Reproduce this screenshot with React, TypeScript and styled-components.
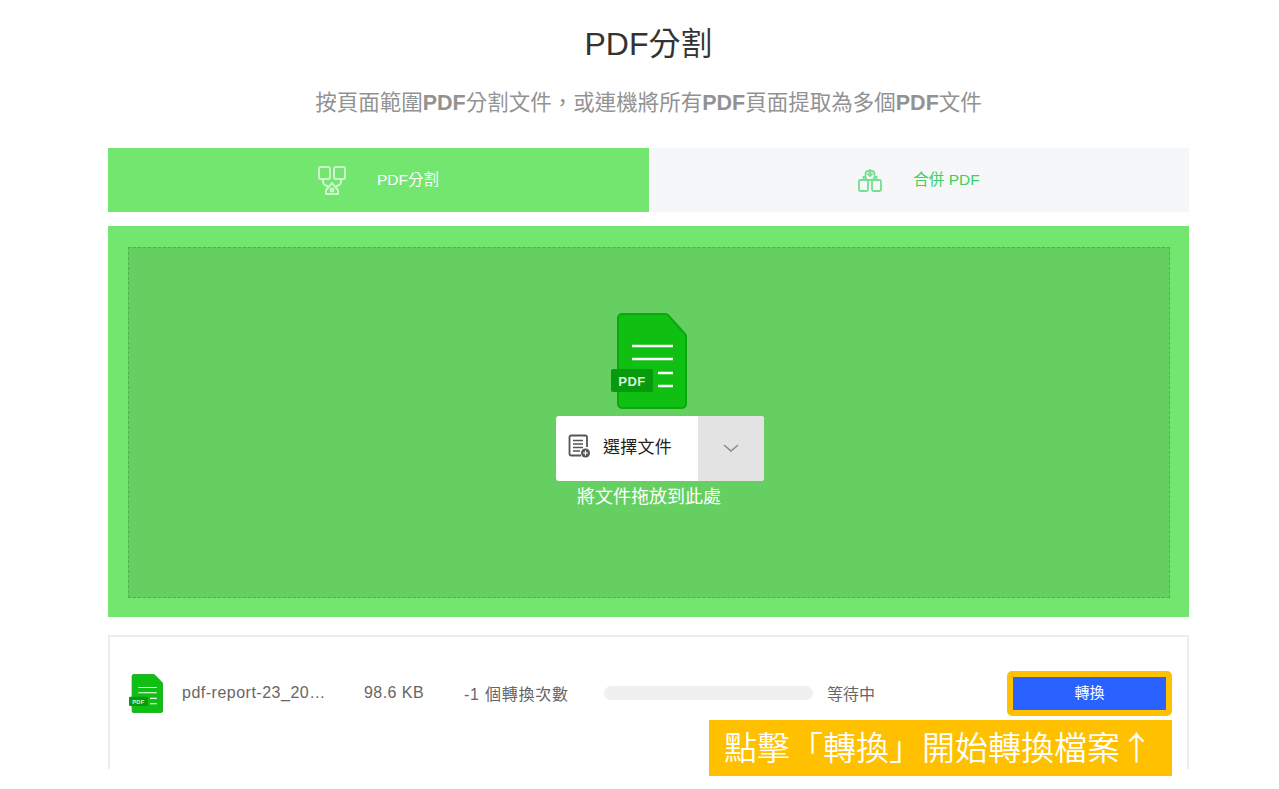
import React from "react"
import styled, { createGlobalStyle } from "styled-components"

const CJK = `"Liberation Sans", "Noto Sans CJK TC", sans-serif`

const GlobalStyle = createGlobalStyle`
    html, body {
        margin: 0;
        padding: 0;
        background: #fff;
        font-family: ${CJK};
    }
`
const Page = styled.main`
    position: relative;
    width: 1081px;
    height: 769px;
    margin-left: 108px;
    overflow: hidden;
`
const Title = styled.h1`
    margin: 0;
    padding-top: 24px;
    height: 40px;
    font-size: 32px;
    line-height: 40px;
    font-weight: 400;
    color: #333;
    text-align: center;
`
const Subtitle = styled.p`
    margin: 0;
    padding-top: 25px;
    font-size: 21.5px;
    line-height: 28px;
    color: #929292;
    text-align: center;
    b {
        font-weight: 700;
    }
`
const Tabs = styled.nav`
    display: flex;
    height: 64px;
    margin-top: 31px;
`
const Tab = styled.div<{ $active?: boolean }>`
    flex: ${(p) => (p.$active ? "0 0 541px" : "1")};
    display: flex;
    align-items: center;
    justify-content: center;
    gap: 31px;
    font-size: 15.5px;
    background: ${(p) => (p.$active ? "#72e66f" : "#f5f7f9")};
    color: ${(p) => (p.$active ? "#fff" : "#3fcf5c")};
    span {
        padding-bottom: 5px;
    }
`
const DropZone = styled.section`
    margin-top: 14px;
    height: 391px;
    padding: 21px 19px 19px 20px;
    box-sizing: border-box;
    background: #72e66f;
`
const DropInner = styled.div`
    height: 100%;
    box-sizing: border-box;
    border: 1px dashed #4fb24f;
    background: #66cf62;
    display: flex;
    flex-direction: column;
    align-items: center;
    padding-top: 65px;
`
const SelectButton = styled.div`
    display: flex;
    width: 208px;
    height: 65px;
    margin: 7px 0 0 22px;
    border-radius: 3px;
    overflow: hidden;
    background: #fff;
`
const SelectLabel = styled.div`
    flex: 1;
    display: flex;
    align-items: center;
    gap: 13px;
    padding: 0 0 6px 12px;
    font-size: 17px;
    letter-spacing: 0.25px;
    color: #222;
`
const SelectArrow = styled.div`
    width: 66px;
    display: flex;
    align-items: center;
    justify-content: center;
    padding-bottom: 2px;
    background: #e3e3e3;
`
const DropHint = styled.div`
    margin-top: 5px;
    font-size: 18px;
    line-height: 22px;
    color: #fff;
`
const FileCard = styled.section`
    margin-top: 18px;
    height: 160px;
    box-sizing: border-box;
    border: 2px solid #ededed;
    padding: 33px 15px 0 19px;
`
const FileRow = styled.div`
    display: flex;
    align-items: center;
    height: 46px;
    font-size: 16px;
    color: #666;
`
const FileName = styled.span`
    width: 145px;
    margin-left: 19px;
    letter-spacing: 0.5px;
    white-space: nowrap;
`
const FileSize = styled.span`
    margin-left: 37px;
    width: 100px;
    letter-spacing: 0.45px;
`
const FileCount = styled.span`
    width: 140px;
    letter-spacing: 0.75px;
`
const Progress = styled.div`
    width: 209px;
    height: 14px;
    border-radius: 7px;
    background: #f0f0f0;
`
const Status = styled.span`
    margin-left: 14px;
`
const ConvertButton = styled.button`
    margin-left: auto;
    width: 165px;
    height: 45px;
    box-sizing: border-box;
    border: 6px solid #ffc000;
    border-radius: 5px;
    background: #2962ff;
    background-clip: padding-box;
    color: #fff;
    font: 15px ${CJK};
    padding: 0 0 4px;
`
const Callout = styled.div`
    position: fixed;
    left: 709px;
    top: 720px;
    width: 463px;
    height: 56px;
    box-sizing: border-box;
    padding-left: 15px;
    background: #ffc000;
    color: #fff;
    font-family: "Noto Sans CJK TC", sans-serif;
    font-size: 33px;
    font-weight: 350;
    line-height: 52px;
    white-space: nowrap;
`

const SplitIcon = () => (
    <svg width="28" height="29" viewBox="0 0 28 29" fill="none" stroke="#fff" strokeOpacity="0.65" strokeWidth="2">
        <rect x="1" y="1" width="11" height="12" rx="2" />
        <rect x="16" y="1" width="11" height="12" rx="2" />
        <path d="M5 13v3q0 2 2 3l3 1.500M23 13v3q0 2-2 3l-3 1.500" />
        <path d="M14 17l6 7v4H8v-4z" />
        <circle cx="14" cy="24" r="1.500" />
    </svg>
)
const MergeIcon = () => (
    <svg width="24" height="24" viewBox="0 0 24 24" fill="none" stroke="#72e08f" strokeWidth="1.800">
        <rect x="1" y="12" width="9" height="11" rx="1.500" />
        <rect x="14" y="12" width="9" height="11" rx="1.500" />
        <path d="M5.500 12V9H8M18.500 12V9H16" />
        <rect x="7.500" y="3" width="9" height="9" rx="3" />
        <path d="M12 1v5M9.500 5.500L12 8l2.500-2.500" />
    </svg>
)
const PdfFile = ({ width, height }: { width: number; height: number }) => (
    <svg width={width} height={height} viewBox="0 0 76 96" preserveAspectRatio="none" style={{ display: "block" }}>
        <path d="M11 1h43a4 4 0 0 1 3 1l17 19a4 4 0 0 1 1 3v67a4 4 0 0 1-4 4H11a4 4 0 0 1-4-4V5a4 4 0 0 1 4-4z" fill="#0fc013" stroke="#0aa80f" strokeWidth="2" />
        <path d="M21 33h41M21 46h41M47 60h15M47 73h15" stroke="#fff" strokeWidth="2.500" fill="none" />
        <rect x="0" y="56" width="42" height="23" rx="2" fill="#079a0c" />
        <text x="21" y="73" textAnchor="middle" fontFamily="'Liberation Sans', sans-serif" fontWeight="700" fontSize="13" letterSpacing="0.5" fill="#d8f5d8">PDF</text>
    </svg>
)
const DocAddIcon = () => (
    <svg width="22" height="24" viewBox="0 0 22 24" fill="none" stroke="#555" strokeWidth="1.800">
        <path d="M19 13V3a1.500 1.500 0 0 0-1.500-1.500H3A1.500 1.500 0 0 0 1.500 3v17A1.500 1.500 0 0 0 3 21.500h10" />
        <path d="M5 6.500h10M5 10h10M5 13.500h10M5 17h7" strokeWidth="1.500" />
        <circle cx="17.500" cy="19" r="4.500" fill="#555" stroke="none" />
        <path d="M15 19h5M17.500 16.500v5" stroke="#fff" strokeWidth="1.200" />
    </svg>
)
const ChevronIcon = () => (
    <svg width="18" height="10" viewBox="0 0 18 10" fill="none" stroke="#8a8a8a" strokeWidth="1.500">
        <path d="M2 2l7 6 7-6" />
    </svg>
)

export default function App() {
    return (
        <>
            <GlobalStyle />
            <Page>
                <Title>PDF分割</Title>
                <Subtitle>按頁面範圍<b>PDF</b>分割文件，或連機將所有<b>PDF</b>頁面提取為多個<b>PDF</b>文件</Subtitle>
                <Tabs>
                    <Tab $active>
                        <SplitIcon />
                        <span>PDF分割</span>
                    </Tab>
                    <Tab>
                        <MergeIcon />
                        <span>合併 PDF</span>
                    </Tab>
                </Tabs>
                <DropZone>
                    <DropInner>
                        <PdfFile width={76} height={96} />
                        <SelectButton>
                            <SelectLabel>
                                <DocAddIcon />
                                選擇文件
                            </SelectLabel>
                            <SelectArrow>
                                <ChevronIcon />
                            </SelectArrow>
                        </SelectButton>
                        <DropHint>將文件拖放到此處</DropHint>
                    </DropInner>
                </DropZone>
                <FileCard>
                    <FileRow>
                        <PdfFile width={34} height={39} />
                        <FileName>pdf-report-23_20…</FileName>
                        <FileSize>98.6 KB</FileSize>
                        <FileCount>-1 個轉換次數</FileCount>
                        <Progress />
                        <Status>等待中</Status>
                        <ConvertButton>轉換</ConvertButton>
                    </FileRow>
                </FileCard>
            </Page>
            <Callout>點擊「轉換」開始轉換檔案↑</Callout>
        </>
    )
}
